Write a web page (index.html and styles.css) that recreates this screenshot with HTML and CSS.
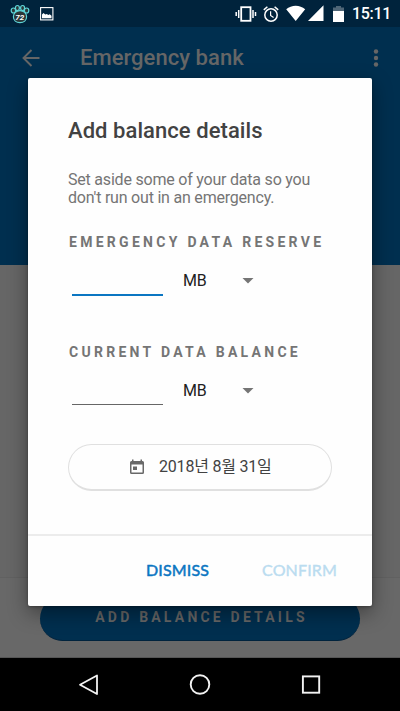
FILE: index.html
```html
<!DOCTYPE html>
<html lang="en">
<head>
<meta charset="utf-8">
<meta name="viewport" content="width=device-width, initial-scale=1">
<title>Emergency bank</title>
<link rel="stylesheet" href="styles.css">
</head>
<body>
<div class="screen">
  <div class="status">
    <svg class="paw" width="20" height="20" viewBox="0 0 20 20">
      <g fill="#2b3638" stroke="#5fd6d8" stroke-width="1.2">
        <ellipse cx="3.4" cy="6.500" rx="2.2" ry="2.5"/>
        <ellipse cx="7.4" cy="4" rx="2" ry="2.5"/>
        <ellipse cx="12.6" cy="4" rx="2" ry="2.5"/>
        <ellipse cx="16.6" cy="6.500" rx="2.2" ry="2.5"/>
        <path d="M10 6.600c3.800 0 6.600 2.800 6.600 6.200 0 3.600-2.800 5.900-6.600 5.900s-6.600-2.300-6.600-5.900c0-3.400 2.800-6.200 6.600-6.200z"/>
      </g>
      <text x="9.700" y="15.500" text-anchor="middle" class="paw-text">72</text>
    </svg>
    <svg class="photo" width="14" height="14" viewBox="0 0 14 14">
      <rect x=".6" y=".6" width="12.300" height="12.300" fill="none" stroke="#fff" stroke-width="1.100"/>
      <path fill="#fff" d="M2 11.300V7.400l1.500-1.300 1.800 1.500 1.500-.6 1.500 1 1.400-.7 1.800 1.500v2.500z"/>
    </svg>
    <span class="grow"></span>
    <svg class="vibrate" width="22" height="18" viewBox="0 0 22 18">
      <g fill="none" stroke="#fff">
        <rect x="6.200" y="2.200" width="9.300" height="13.600" stroke-width="1.800"/>
        <path stroke-width="1.500" d="M3.700 5v8M1.200 7v4M18 5v8M20.500 7v4"/>
      </g>
    </svg>
    <svg class="alarm" width="16" height="18" viewBox="0 0 16 18">
      <g fill="none" stroke="#fff" stroke-width="1.500">
        <circle cx="8" cy="10" r="6.200"/>
        <path d="M.8 4.900 4.400 1.700M15.200 4.900l-3.600-3.200"/>
        <path stroke-width="1.200" d="M7.600 6.300v4.200l3 1.900"/>
      </g>
    </svg>
    <svg class="signals" width="38" height="17" viewBox="0 0 38 17">
      <path fill="#fff" d="M.2 4.300C5.500-.4 13.900-.4 19.200 4.300L9.700 16zM37.500.3V16H22z"/>
    </svg>
    <svg class="battery" width="11" height="16" viewBox="0 0 11 16">
      <path fill="#4f6677" d="M0 1.500h3V0h5v1.500h3V5H0z"/>
      <path fill="#fff" d="M0 5h11v11H0z"/>
    </svg>
    <span class="time">15:11</span>
  </div>
  <header class="appbar">
    <svg width="18" height="18" viewBox="0 0 18 18"><path fill="none" stroke="#666" stroke-width="1.900" d="M17.500 9H1.500M9.500 1 1.500 9l8 8"/></svg>
    <h1>Emergency bank</h1>
    <svg width="6" height="18" viewBox="0 0 6 18"><g fill="#666"><circle cx="3" cy="2.500" r="2.200"/><circle cx="3" cy="9" r="2.200"/><circle cx="3" cy="15.500" r="2.200"/></g></svg>
  </header>
  <main class="content"></main>
  <footer class="footer"><div class="add">ADD BALANCE DETAILS</div></footer>
  <nav class="nav">
    <svg width="22" height="22" viewBox="0 0 22 22"><path fill="none" stroke="#f2f2f2" stroke-width="1.800" stroke-linejoin="round" d="M19 1.500v18.500L2 10.700z"/></svg>
    <svg width="22" height="22" viewBox="0 0 22 22"><circle cx="11" cy="10.500" r="9.300" fill="none" stroke="#f2f2f2" stroke-width="1.900"/></svg>
    <svg width="22" height="22" viewBox="0 0 22 22"><rect x="2.900" y="2.400" width="16.300" height="16.300" fill="none" stroke="#f2f2f2" stroke-width="1.900"/></svg>
  </nav>
  <section class="dialog" role="dialog">
    <div class="body">
      <h2>Add balance details</h2>
      <p>Set aside some of your data so you<br>don't run out in an emergency.</p>
      <h3 class="reserve">EMERGENCY DATA RESERVE</h3>
      <div class="field">
        <span class="line active"></span>
        <span class="unit">MB</span>
        <svg width="12" height="6" viewBox="0 0 12 6"><path fill="#757575" d="M.5 0h11L6 5.500z"/></svg>
      </div>
      <h3 class="current">CURRENT DATA BALANCE</h3>
      <div class="field">
        <span class="line"></span>
        <span class="unit">MB</span>
        <svg width="12" height="6" viewBox="0 0 12 6"><path fill="#757575" d="M.5 0h11L6 5.500z"/></svg>
      </div>
      <div class="date">
        <svg width="14" height="16" viewBox="0 0 14 16"><path fill="#686868" fill-rule="evenodd" d="M2 .5h1.500V2h7V.5H12V2h.5Q14 2 14 3.500v10q0 1.500-1.500 1.500h-11Q0 15 0 13.500v-10Q0 2 1.500 2H2zM1.500 5.500v8h11v-8zM3 7.500h4v3.500H3z"/></svg>
        <span>2018년 8월 31일</span>
      </div>
    </div>
    <div class="actions"><span class="dismiss">DISMISS</span><span class="confirm">CONFIRM</span></div>
  </section>
</div>
</body>
</html>
```
FILE: styles.css
```css
* { box-sizing: border-box; }
body {
  margin: 0;
  font-family: Roboto, "Noto Sans CJK KR", sans-serif;
}
svg { display: block; flex: none; }
h1, h2, h3, p { margin: 0; white-space: nowrap; }
.screen {
  position: relative;
  display: flex;
  flex-direction: column;
  width: 400px;
  height: 711px;
  overflow: hidden;
  background: #666;
}
.status {
  display: flex;
  align-items: center;
  height: 27px;
  padding: 0 9px 0 10px;
  background: #00233c;
}
.paw-text {
  font: italic 700 8px Roboto, sans-serif;
  fill: #fff;
}
.photo { margin-left: 10px; }
.grow { flex: 1; }
.alarm { margin-left: 6px; }
.signals { margin-left: 7px; }
.battery { margin-left: 9px; }
.time {
  width: 39px;
  margin-left: 8px;
  color: #fff;
  font-size: 16px;
  font-weight: 500;
  line-height: 27px;
  letter-spacing: -.3px;
  white-space: nowrap;
}
.appbar {
  display: flex;
  align-items: flex-start;
  height: 238px;
  padding: 22px 21px 0 22px;
  background: #002f4f;
}
.appbar h1 {
  flex: 1;
  margin: -6px 0 0 40px;
  color: #666;
  font-size: 22px;
  font-weight: 500;
  line-height: 30px;
  letter-spacing: .04px;
}
.content { flex: 1; }
.footer {
  height: 81px;
  padding: 18px 40px 0;
  border-top: 1px solid #616161;
  border-bottom: 1px solid #555;
  background: #686868;
}
.add {
  height: 45px;
  border-radius: 23px;
  border-bottom: 1px solid #00233d;
  background: #002f4f;
  color: #666;
  font-size: 14px;
  font-weight: 700;
  letter-spacing: 3.2px;
  line-height: 43px;
  text-align: center;
  text-indent: 3px;
  white-space: nowrap;
}
.nav {
  display: flex;
  justify-content: space-between;
  align-items: center;
  height: 53px;
  padding: 0 78px;
  background: #000;
}
.dialog {
  position: absolute;
  left: 28px;
  top: 78px;
  width: 344px;
  height: 528px;
  border-radius: 2px;
  background: #fefefe;
  box-shadow: 0 7px 20px rgba(0, 0, 0, .4), 0 1px 3px rgba(0, 0, 0, .3);
}
.body {
  height: 458px;
  padding: 38px 40px 0;
  border-bottom: 2px solid #ececec;
}
.dialog h2 {
  color: #424242;
  font-size: 22px;
  font-weight: 500;
  line-height: 30px;
  letter-spacing: .06px;
}
.dialog p {
  margin-top: 25px;
  color: #757575;
  font-size: 16px;
  line-height: 18px;
  letter-spacing: -.21px;
}
.dialog h3 {
  margin-left: 1px;
  color: #757575;
  font-size: 14px;
  font-weight: 700;
  line-height: 20px;
  letter-spacing: 3.28px;
}
.dialog .reserve { margin-top: 25px; }
.dialog .current { margin-top: 46px; }
.field {
  display: flex;
  align-items: center;
  height: 44px;
  padding: 14px 0 0 4px;
}
.line {
  align-self: flex-end;
  width: 91px;
  height: 1px;
  margin-bottom: 1px;
  background: #666;
}
.line.active {
  height: 2px;
  margin-bottom: 0;
  background: #0b76c2;
}
.unit {
  width: 59px;
  margin-left: 20px;
  color: #212121;
  font-size: 16px;
  line-height: 20px;
  letter-spacing: -.3px;
}
.date {
  display: flex;
  align-items: center;
  gap: 15px;
  height: 47px;
  margin-top: 38px;
  padding-left: 61px;
  border: 1px solid #e0e0e0;
  border-bottom-width: 2px;
  border-radius: 24px;
  color: #424242;
  font-size: 16px;
  line-height: 20px;
  letter-spacing: -.2px;
  white-space: nowrap;
}
.actions {
  display: flex;
  justify-content: flex-end;
  gap: 53px;
  padding: 24px 35px 0 0;
  font-family: Lato, sans-serif;
  font-size: 16px;
  font-weight: 400;
  line-height: 20px;
  letter-spacing: .15px;
}
.dismiss {
  color: #0b76c2;
  -webkit-text-stroke: .5px #0b76c2;
}
.confirm {
  color: #badcf0;
  -webkit-text-stroke: .4px #badcf0;
}
```
